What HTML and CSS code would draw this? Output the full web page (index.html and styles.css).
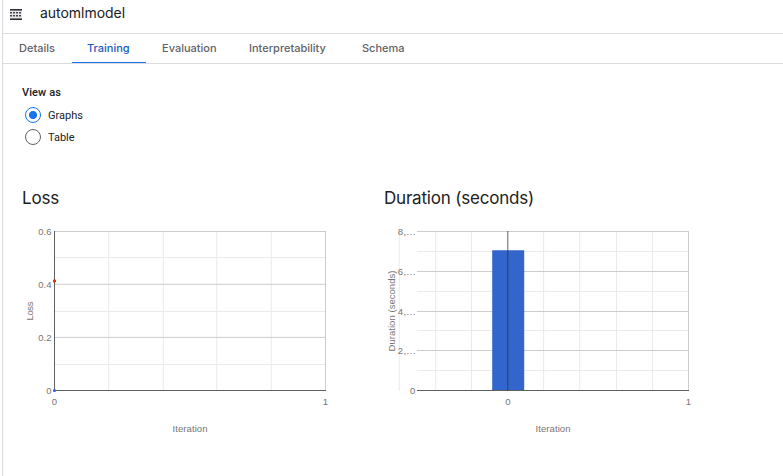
FILE: index.html
```html
<!DOCTYPE html>
<html lang="en">
<head>
<meta charset="utf-8">
<title>automlmodel</title>
<link rel="stylesheet" href="styles.css">
</head>
<body>
<div class="panel">
  <header class="header">
    <svg class="model-icon" width="12" height="12" viewBox="0 0 12 12" shape-rendering="crispEdges">
      <path class="model-back" d="M0 0H12V11H0Z"/>
      <path class="model-bars" d="M0 0.5H12M0 10.5H12"/>
      <path class="model-shade" d="M0 1.5H12M0 9.5H12"/>
      <path class="model-dots" d="M0 3.5H12M0 6.5H12"/>
      <path class="model-dots light" d="M0 4.5H12M0 7.5H12"/>
    </svg>
    <h1 class="name">automlmodel</h1>
  </header>
  <nav class="tabs">
    <a class="tab details">Details</a>
    <a class="tab training active">Training</a>
    <a class="tab evaluation">Evaluation</a>
    <a class="tab interpretability">Interpretability</a>
    <a class="tab schema">Schema</a>
  </nav>
  <main class="content">
    <div class="view-label">View as</div>
    <label class="option"><span class="radio checked"></span>Graphs</label>
    <label class="option"><span class="radio"></span>Table</label>
    <div class="charts">
      <section class="chart">
        <h2 class="chart-title"><span class="loss-title">Loss</span></h2>
        <svg class="plot" width="340" height="220" viewBox="22 220 340 220">
          <path class="minor" d="M55 257.5H325M55 311.5H325M55 364.5H325"/>
          <path class="minor" d="M108.7 231V390M163.3 231V390M216.7 231V390M271.3 231V390"/>
          <path class="major" d="M55 231.5H326M55 284.3H326M55 337.4H326M325.5 231V390"/>
          <path class="axis" d="M54.5 231V391M54 390.5H326"/>
          <circle class="train" cx="54.5" cy="390.5" r="1.6"/>
          <circle class="eval" cx="54.5" cy="281" r="1.7"/>
          <g class="end"><text x="51.5" y="235">0.6</text><text x="51.5" y="288">0.4</text><text x="51.5" y="341">0.2</text><text x="51.5" y="394">0</text></g>
          <g class="mid"><text x="54.5" y="405">0</text><text x="325.5" y="405">1</text><text x="190" y="432" textLength="35">Iteration</text>
          <text transform="translate(33 311) rotate(-90)" textLength="19">Loss</text></g>
        </svg>
      </section>
      <section class="chart">
        <h2 class="chart-title"><span class="duration-title">Duration (seconds)</span></h2>
        <svg class="plot" width="340" height="220" viewBox="384 220 340 220">
          <path class="minor" d="M417 251.5H688M417 291.5H688M417 330.5H688M417 370.5H688"/>
          <path class="minor" d="M399.3 231V391M435.7 231V390M471.5 231V390M543.6 231V390M579.7 231V390M616.5 231V390M652.5 231V390"/>
          <path class="major" d="M417 231.5H689M417 271.5H689M417 311.5H689M417 350.5H689M688.5 231V390"/>
          <path class="bar" d="M492.2 250.2H524.2V390H492.2Z"/>
          <path class="axis" d="M417 390.5H689M507.8 231V391"/>
          <g class="end"><text x="415.3" y="235" textLength="17.5">8,...</text><text x="415.3" y="275" textLength="17.5">6,...</text><text x="415.3" y="314.5" textLength="17.5">4,...</text><text x="415.3" y="354" textLength="17.5">2,...</text><text x="415.3" y="394">0</text></g>
          <g class="mid"><text x="508" y="405">0</text><text x="688.5" y="405">1</text><text x="553" y="432" textLength="35">Iteration</text>
          <text transform="translate(395 311) rotate(-90)" textLength="81">Duration (seconds)</text></g>
        </svg>
      </section>
    </div>
  </main>
</div>
</body>
</html>
```

FILE: styles.css
```css
* { box-sizing: border-box; }
body { margin: 0; background: #fff; color: #202124; font-family: Roboto, sans-serif; overflow: hidden; }
.panel { height: 476px; margin-left: 2px; border-left: 1px solid #dadce0; }
.header { height: 34px; display: flex; align-items: flex-start; padding: 9px 0 0 7px; border-bottom: 1px solid #dadce0; }
.model-icon { display: block; }
.model-back { fill: #e8e8ea; }
.model-bars { fill: none; stroke: #303134; stroke-width: 1; }
.model-shade { fill: none; stroke: #77797d; stroke-width: 1; }
.model-dots { fill: none; stroke: #3c4043; stroke-width: 1; stroke-dasharray: 2 1; }
.light { stroke: #97999c; }
.name { margin: -5px 0 0 18px; font: 400 14px/18px Inter, sans-serif; letter-spacing: -0.03px; }
.tabs { height: 30px; display: flex; padding-left: 0; border-bottom: 1px solid #dadce0; font: 500 11px/28px Inter, sans-serif; color: #5f6368; }
.tab { height: 29px; padding: 0 16px; white-space: nowrap; }
.details { width: 69px; }
.training { width: 74px; padding-left: 15px; }
.evaluation { width: 87px; }
.interpretability { width: 113px; }
.active { color: #185abc; border-bottom: 1px solid #1a73e8; }
.content { padding: 22px 0 0 19px; }
.view-label { font-size: 11px; font-weight: 500; line-height: 14px; margin-bottom: 4px; letter-spacing: 0.1px; }
.option { height: 22px; display: flex; align-items: center; gap: 7px; padding-left: 3px; font-size: 11px; }
.radio { width: 16px; height: 16px; border: 1px solid #5f6368; border-radius: 50%; }
.checked { border: 1.5px solid #1a73e8; background: radial-gradient(circle, #1a73e8 3.7px, #fff 4.4px); }
.charts { display: grid; grid-template-columns: 362px 340px; margin-top: 38px; }
.chart-title { margin: 0; height: 34px; font: 400 17px/24px Inter, sans-serif; letter-spacing: -0.2px; white-space: nowrap; }
.plot { display: block; font-family: "Liberation Sans", sans-serif; font-size: 9.5px; fill: #757575; }
.minor { fill: none; stroke: #ebebeb; }
.major { fill: none; stroke: #ccc; }
.axis { fill: none; stroke: #333; stroke-opacity: .78; }
.bar { fill: #36c; }
.train { fill: #36c; }
.eval { fill: #dc3912; }
.end { text-anchor: end; }
.mid { text-anchor: middle; }
```
